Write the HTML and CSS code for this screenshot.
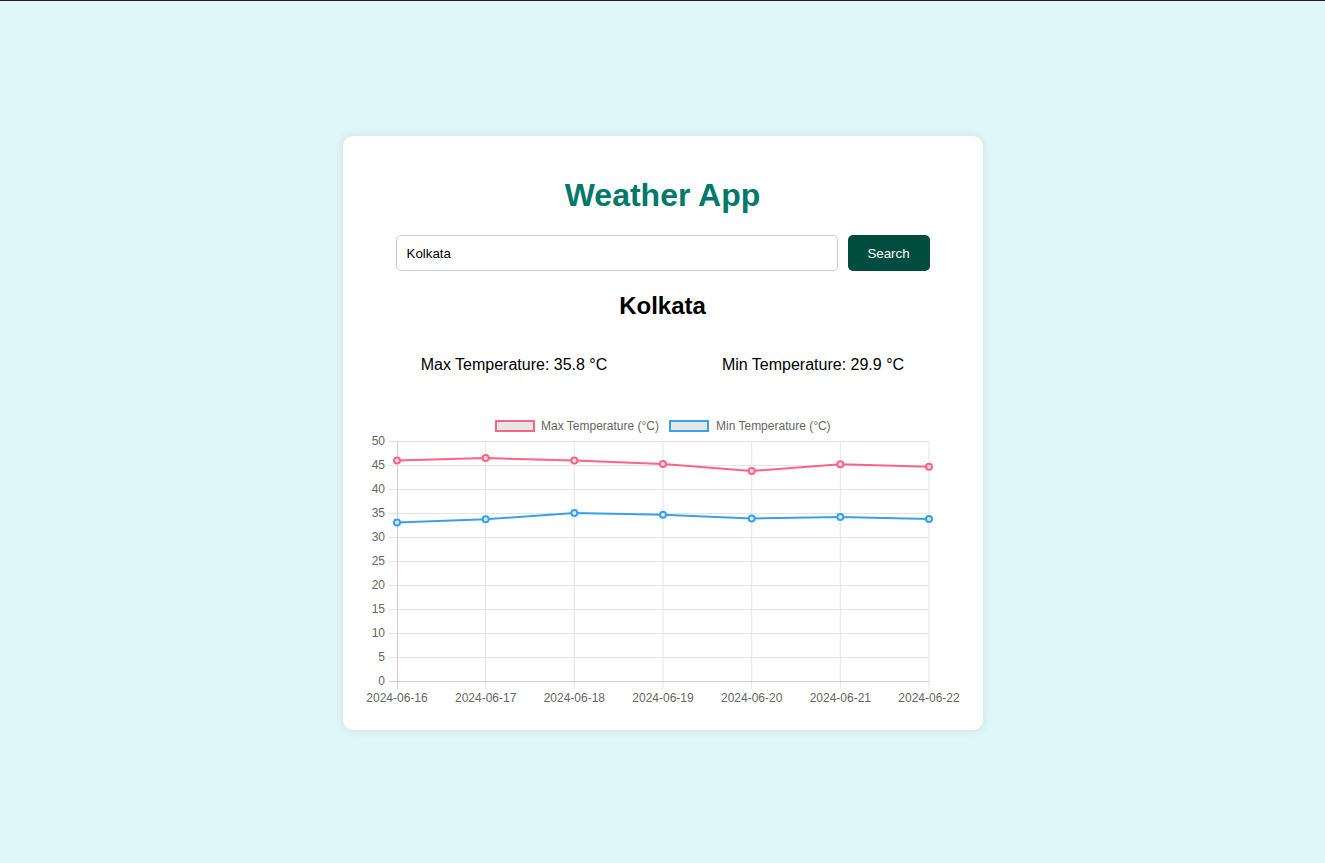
FILE: index.html
```html
<!DOCTYPE html>
<html lang="en">
<head>
<meta charset="utf-8">
<title>Weather App</title>
<link rel="stylesheet" href="styles.css">
</head>
<body>
<div class="card">
  <h1 class="title">Weather App</h1>
  <form class="search" onsubmit="return false">
    <input class="search-input" type="text" value="Kolkata">
    <button class="search-btn" type="submit">Search</button>
  </form>
  <h2 class="city">Kolkata</h2>
  <div class="temps">
    <p class="temp">Max Temperature: 35.8 °C</p>
    <p class="temp">Min Temperature: 29.9 °C</p>
  </div>
  <div class="chart">
    <svg class="chart-svg" width="600" height="300" viewBox="0 0 600 300">
      <g class="legend">
        <rect x="133" y="11" width="38" height="10" fill="#e6e6e6" stroke="#ff6384" stroke-width="2"/>
        <text x="178" y="16" class="lbl" dominant-baseline="central">Max Temperature (°C)</text>
        <rect x="307" y="11" width="38" height="10" fill="#e6e6e6" stroke="#36a2eb" stroke-width="2"/>
        <text x="353" y="16" class="lbl" dominant-baseline="central">Min Temperature (°C)</text>
      </g>
      <g stroke="#e5e5e5" stroke-width="1">
        <line x1="26" y1="31.5" x2="566" y2="31.5"/>
        <line x1="26" y1="55.5" x2="566" y2="55.5"/>
        <line x1="26" y1="79.5" x2="566" y2="79.5"/>
        <line x1="26" y1="103.5" x2="566" y2="103.5"/>
        <line x1="26" y1="127.5" x2="566" y2="127.5"/>
        <line x1="26" y1="151.5" x2="566" y2="151.5"/>
        <line x1="26" y1="175.5" x2="566" y2="175.5"/>
        <line x1="26" y1="199.5" x2="566" y2="199.5"/>
        <line x1="26" y1="223.5" x2="566" y2="223.5"/>
        <line x1="26" y1="247.5" x2="566" y2="247.5"/>
        <line x1="122.67" y1="31" x2="122.67" y2="279"/>
        <line x1="211.33" y1="31" x2="211.33" y2="279"/>
        <line x1="300" y1="31" x2="300" y2="279"/>
        <line x1="388.67" y1="31" x2="388.67" y2="279"/>
        <line x1="477.33" y1="31" x2="477.33" y2="279"/>
        <line x1="566" y1="31" x2="566" y2="279"/>
      </g>
      <g stroke="#cfcfcf" stroke-width="1">
        <line x1="34.5" y1="31" x2="34.5" y2="279"/>
        <line x1="26" y1="271.5" x2="566" y2="271.5"/>
      </g>
      <g class="lbl" text-anchor="end" dominant-baseline="central">
        <text x="22" y="31">50</text>
        <text x="22" y="55">45</text>
        <text x="22" y="79">40</text>
        <text x="22" y="103">35</text>
        <text x="22" y="127">30</text>
        <text x="22" y="151">25</text>
        <text x="22" y="175">20</text>
        <text x="22" y="199">15</text>
        <text x="22" y="223">10</text>
        <text x="22" y="247">5</text>
        <text x="22" y="271">0</text>
      </g>
      <g class="lbl" text-anchor="middle" dominant-baseline="central">
        <text x="34" y="288">2024-06-16</text>
        <text x="122.67" y="288">2024-06-17</text>
        <text x="211.33" y="288">2024-06-18</text>
        <text x="300" y="288">2024-06-19</text>
        <text x="388.67" y="288">2024-06-20</text>
        <text x="477.33" y="288">2024-06-21</text>
        <text x="566" y="288">2024-06-22</text>
      </g>
      <polyline fill="none" stroke="#ff6384" stroke-width="2" points="34,50.5 122.67,48 211.33,50.5 300,54 388.67,61 477.33,54.3 566,56.8"/>
      <polyline fill="none" stroke="#36a2eb" stroke-width="2" points="34,112.5 122.67,109.2 211.33,103 300,104.8 388.67,108.5 477.33,107 566,109"/>
      <g fill="#fce3e8" stroke="#ff6384" stroke-width="2">
        <circle cx="34" cy="50.5" r="3"/>
        <circle cx="122.67" cy="48" r="3"/>
        <circle cx="211.33" cy="50.5" r="3"/>
        <circle cx="300" cy="54" r="3"/>
        <circle cx="388.67" cy="61" r="3"/>
        <circle cx="477.33" cy="54.3" r="3"/>
        <circle cx="566" cy="56.8" r="3"/>
      </g>
      <g fill="#dbe9f5" stroke="#36a2eb" stroke-width="2">
        <circle cx="34" cy="112.5" r="3"/>
        <circle cx="122.67" cy="109.2" r="3"/>
        <circle cx="211.33" cy="103" r="3"/>
        <circle cx="300" cy="104.8" r="3"/>
        <circle cx="388.67" cy="108.5" r="3"/>
        <circle cx="477.33" cy="107" r="3"/>
        <circle cx="566" cy="109" r="3"/>
      </g>
    </svg>
  </div>
</div>
</body>
</html>
```
FILE: styles.css
```css
* { box-sizing: border-box; }

html, body { height: 100%; }

body {
  margin: 0;
  min-height: 100vh;
  border-top: 1px solid #222;
  padding-top: 2px;
  background: #e0f7fa;
  font-family: "Liberation Sans", Arial, sans-serif;
  display: flex;
  align-items: center;
  justify-content: center;
}

.card {
  width: 640px;
  background: #fff;
  border-radius: 10px;
  padding: 20px;
  box-shadow: 0 0 10px rgba(0, 0, 0, 0.1);
  text-align: center;
}

.title {
  font-size: 32px;
  font-weight: bold;
  color: #00796b;
  margin: 21px 0 21px;
  line-height: 37px;
}

.search {
  display: flex;
  justify-content: center;
  gap: 10px;
  margin: 0;
}

.search-input {
  width: 442px;
  height: 36px;
  padding: 10px;
  border: 1px solid #ccc;
  border-radius: 5px;
  font-family: "Liberation Sans", Arial, sans-serif;
  font-size: 13.33px;
  color: #000;
  outline: none;
}

.search-btn {
  width: 82px;
  height: 36px;
  padding: 0;
  border: none;
  border-radius: 5px;
  background: #004d40;
  color: #fff;
  font-family: "Liberation Sans", Arial, sans-serif;
  font-size: 13.33px;
}

.city {
  font-size: 24px;
  font-weight: bold;
  margin: 21px 0 20px;
  line-height: 28px;
  color: #000;
}

.temps {
  display: flex;
  padding-left: 2px;
}

.temp {
  flex: 1;
  margin: 16px 0;
  font-size: 16px;
  line-height: 18px;
  color: #000;
}

.chart {
  margin-top: 20px;
  height: 300px;
}

.chart-svg {
  display: block;
}

.lbl {
  font-family: "Liberation Sans", Arial, sans-serif;
  font-size: 12px;
  fill: #666;
}
```
